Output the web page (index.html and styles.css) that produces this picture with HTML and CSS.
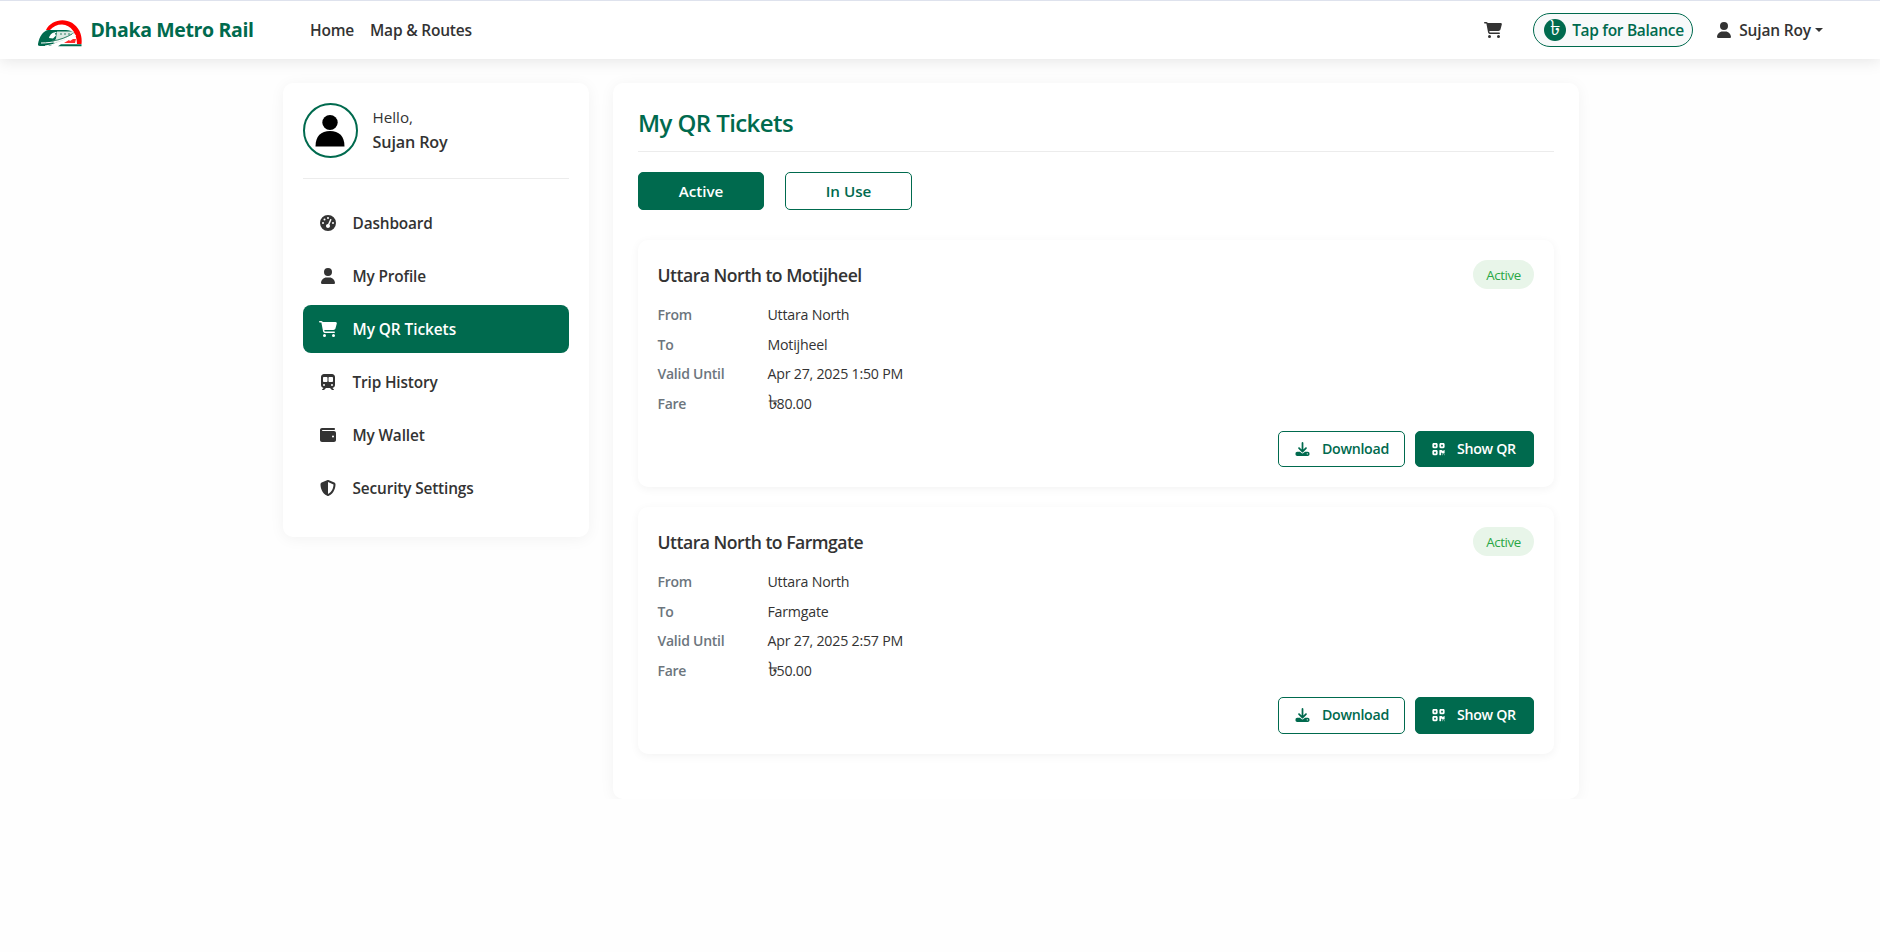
FILE: index.html
```html
<!DOCTYPE html>
<html lang="en">
<head>
<meta charset="utf-8">
<title>Dhaka Metro Rail - My QR Tickets</title>
<link rel="stylesheet" href="styles.css">
</head>
<body>
<svg class="sprite" aria-hidden="true">
  <symbol id="cart" viewBox="0 0 576 512"><path d="M0 24C0 10.700 10.700 0 24 0H69.500c22 0 41.500 12.800 50.600 32h411c26.300 0 45.500 25 38.600 50.400l-41 152.300c-8.500 31.400-37 53.300-69.500 53.300H170.700l5.400 28.500c2.200 11.300 12.100 19.500 23.600 19.500H488c13.300 0 24 10.700 24 24s-10.700 24-24 24H199.700c-34.600 0-64.300-24.600-70.700-58.500L77.400 54.500c-.7-3.800-4-6.500-7.900-6.500H24C10.700 48 0 37.300 0 24zM128 464a48 48 0 1 1 96 0 48 48 0 1 1-96 0zm336-48a48 48 0 1 1 0 96 48 48 0 1 1 0-96z"/></symbol>
  <symbol id="user" viewBox="0 0 448 512"><path d="M224 256A128 128 0 1 0 224 0a128 128 0 1 0 0 256zm-45.700 48C79.800 304 0 383.800 0 482.300C0 498.700 13.300 512 29.700 512H418.300c16.400 0 29.700-13.300 29.700-29.700C448 383.800 368.200 304 269.700 304H178.300z"/></symbol>
  <symbol id="gauge" viewBox="0 0 512 512"><path d="M0 256a256 256 0 1 1 512 0A256 256 0 1 1 0 256zM288 96a32 32 0 1 0-64 0 32 32 0 1 0 64 0zM256 416c35.300 0 64-28.700 64-64c0-17.400-6.900-33.100-18.100-44.600L366 161.700c5.300-12.100-.2-26.300-12.300-31.600s-26.300 .2-31.600 12.300L257.900 288c-.6 0-1.300 0-1.900 0c-35.300 0-64 28.700-64 64s28.700 64 64 64zM176 144a32 32 0 1 0-64 0 32 32 0 1 0 64 0zM96 288a32 32 0 1 0 0-64 32 32 0 1 0 0 64zm352-32a32 32 0 1 0-64 0 32 32 0 1 0 64 0z"/></symbol>
  <symbol id="train" viewBox="0 0 448 512"><path fill-rule="evenodd" d="M96 0C43 0 0 43 0 96V352c0 48 35.200 87.700 81.100 94.900l-46 46C28.100 499.900 33.100 512 43 512H82.700c8.500 0 16.600-3.400 22.600-9.400L160 448H288l54.600 54.600c6 6 14.100 9.400 22.600 9.400H405c10 0 15-12.100 7.900-19.100l-46-46c46-7.100 81.100-46.900 81.100-94.900V96c0-53-43-96-96-96H96zM64 128c0-17.700 14.300-32 32-32h80c17.700 0 32 14.300 32 32v96c0 17.700-14.300 32-32 32H96c-17.700 0-32-14.300-32-32V128zM272 96h80c17.700 0 32 14.300 32 32v96c0 17.700-14.300 32-32 32H272c-17.700 0-32-14.300-32-32V128c0-17.700 14.300-32 32-32zM64 352a32 32 0 1 1 64 0 32 32 0 1 1-64 0zm288-32a32 32 0 1 1 0 64 32 32 0 1 1 0-64z"/></symbol>
  <symbol id="wallet" viewBox="0 0 512 512"><path fill-rule="evenodd" d="M64 32C28.700 32 0 60.700 0 96V416c0 35.300 28.700 64 64 64H448c35.300 0 64-28.700 64-64V192c0-35.300-28.700-64-64-64H80c-8.800 0-16-7.200-16-16s7.200-16 16-16H448c17.700 0 32-14.300 32-32s-14.300-32-32-32H64zM416 272a32 32 0 1 1 0 64 32 32 0 1 1 0-64z"/></symbol>
  <symbol id="shield" viewBox="0 0 512 512"><path fill-rule="evenodd" d="M256 0c4.600 0 9.200 1 13.400 2.900L457.700 82.800c22 9.300 38.400 31 38.300 57.200c-.5 99.200-41.300 280.700-213.600 363.200c-16.700 8-36.100 8-52.800 0C57.300 420.700 16.500 239.200 16 140c-.1-26.200 16.300-47.900 38.300-57.200L242.700 2.900C246.800 1 251.400 0 256 0zm0 66.800V444.800C394 378 431.100 230.100 432 141.400L256 66.800z"/></symbol>
  <symbol id="download" viewBox="0 0 512 512"><path fill-rule="evenodd" d="M288 32c0-17.700-14.300-32-32-32s-32 14.300-32 32V274.700l-73.400-73.400c-12.500-12.500-32.800-12.500-45.300 0s-12.500 32.800 0 45.300l128 128c12.500 12.500 32.800 12.500 45.300 0l128-128c12.500-12.500 12.500-32.800 0-45.300s-32.800-12.500-45.300 0L288 274.700V32zM64 352c-35.300 0-64 28.700-64 64v32c0 35.300 28.700 64 64 64H448c35.300 0 64-28.700 64-64V416c0-35.300-28.700-64-64-64H346.500l-45.300 45.300c-25 25-65.500 25-90.500 0L165.500 352H64zm368 56a24 24 0 1 1 0 48 24 24 0 1 1 0-48z"/></symbol>
  <symbol id="qr" viewBox="0 0 448 512"><path fill-rule="evenodd" d="M0 80C0 53.500 21.500 32 48 32h96c26.500 0 48 21.500 48 48v96c0 26.500-21.500 48-48 48H48c-26.500 0-48-21.500-48-48V80zM64 96v64h64V96H64zM0 336c0-26.500 21.500-48 48-48h96c26.500 0 48 21.500 48 48v96c0 26.500-21.500 48-48 48H48c-26.500 0-48-21.500-48-48V336zm64 16v64h64V352H64zM304 32h96c26.500 0 48 21.500 48 48v96c0 26.500-21.500 48-48 48H304c-26.500 0-48-21.500-48-48V80c0-26.500 21.500-48 48-48zm80 64H320v64h64V96zM256 304c0-8.800 7.200-16 16-16h64c8.800 0 16 7.200 16 16s7.200 16 16 16h32c8.800 0 16-7.200 16-16s7.200-16 16-16 16 7.200 16 16v96c0 8.800-7.200 16-16 16H368c-8.800 0-16-7.200-16-16s-7.200-16-16-16-16 7.200-16 16v64c0 8.800-7.200 16-16 16H272c-8.800 0-16-7.200-16-16V304zM368 480a16 16 0 1 1 0-32 16 16 0 1 1 0 32zm64 0a16 16 0 1 1 0-32 16 16 0 1 1 0 32z"/></symbol>
</svg>

<header class="navbar">
  <a class="brand">
    <svg class="brand-logo" viewBox="0 0 44 27">
      <path d="M8 10C14-2.500 34-4 41.500 11c2 4 2.500 9 2 13H39C39 14 33 4.500 24 4.500c-5 0-9 2-12 5.500z" fill="#f00"/>
      <path d="M0 24C1 17 5 11 10 10h18c3 0 6 1 8 3L12 26H2C0 26 0 25 0 24z" fill="#006a4e"/>
      <path d="M11 18c1-4 4-6 8-6l-2 1.500 1 2-3 3z" fill="#fff"/>
      <path d="M19 11.500h17c-5 7-13 11-21 12l3-5z" fill="#dce9e3"/>
      <path d="M3 23c12 0 24-3 33-9M7 26c12-2 22-5 31-11" stroke="#fff" stroke-width="1" fill="none"/>
      <path d="M14 21c8-1 15-4 20-7M22 14h2m2 0h2m2 0h2" stroke="#2f8267" stroke-width="1" fill="none"/>
      <path d="M26 23l5-3 1 1 3-2h3l-1 4z" fill="#ff2a2a"/>
      <path d="M23 24.300h20.500v2H20z" fill="#006a4e"/>
    </svg>
    <span class="brand-name">Dhaka Metro Rail</span>
  </a>
  <nav class="main-nav"><a>Home</a><a>Map &amp; Routes</a></nav>
  <div class="nav-right">
    <svg class="nav-cart"><use href="#cart"/></svg>
    <button class="balance"><span class="coin">৳</span><span class="balance-text">Tap for Balance</span></button>
    <a class="account"><svg class="account-icon"><use href="#user"/></svg><span class="account-name">Sujan Roy</span><span class="caret"></span></a>
  </div>
</header>

<main class="layout">
  <aside class="card sidebar">
    <div class="profile">
      <div class="avatar"><svg viewBox="0 0 30 32"><ellipse cx="15" cy="7.500" rx="7.700" ry="7.500"/><path d="M.5 31.500C.5 21 6 16 15 16s14.500 5 14.500 15.500z"/></svg></div>
      <div class="greeting"><span class="hello">Hello,</span><span class="profile-name">Sujan Roy</span></div>
    </div>
    <nav class="menu">
      <a class="menu-item"><svg class="menu-icon"><use href="#gauge"/></svg><span class="menu-label">Dashboard</span></a>
      <a class="menu-item"><svg class="menu-icon"><use href="#user"/></svg><span class="menu-label">My Profile</span></a>
      <a class="menu-item selected"><svg class="menu-icon"><use href="#cart"/></svg><span class="menu-label">My QR Tickets</span></a>
      <a class="menu-item"><svg class="menu-icon"><use href="#train"/></svg><span class="menu-label">Trip History</span></a>
      <a class="menu-item"><svg class="menu-icon"><use href="#wallet"/></svg><span class="menu-label">My Wallet</span></a>
      <a class="menu-item"><svg class="menu-icon"><use href="#shield"/></svg><span class="menu-label">Security Settings</span></a>
    </nav>
  </aside>

  <section class="card content">
    <h1 class="page-title"><span>My QR Tickets</span></h1>
    <div class="tabs"><button class="tab tab-on">Active</button><button class="tab">In Use</button></div>
    <div class="tickets">
      <article class="ticket">
        <div class="ticket-head"><h2 class="ticket-title">Uttara North to Motijheel</h2><span class="badge">Active</span></div>
        <dl class="details">
          <dt>From</dt><dd>Uttara North</dd>
          <dt>To</dt><dd>Motijheel</dd>
          <dt>Valid Until</dt><dd>Apr 27, 2025 1:50 PM</dd>
          <dt>Fare</dt><dd><span class="taka">৳</span>80.00</dd>
        </dl>
        <div class="actions"><button class="btn btn-outline"><svg class="btn-icon"><use href="#download"/></svg><span>Download</span></button><button class="btn btn-solid"><svg class="btn-icon"><use href="#qr"/></svg><span>Show QR</span></button></div>
      </article>
      <article class="ticket">
        <div class="ticket-head"><h2 class="ticket-title">Uttara North to Farmgate</h2><span class="badge">Active</span></div>
        <dl class="details">
          <dt>From</dt><dd>Uttara North</dd>
          <dt>To</dt><dd>Farmgate</dd>
          <dt>Valid Until</dt><dd>Apr 27, 2025 2:57 PM</dd>
          <dt>Fare</dt><dd><span class="taka">৳</span>50.00</dd>
        </dl>
        <div class="actions"><button class="btn btn-outline"><svg class="btn-icon"><use href="#download"/></svg><span>Download</span></button><button class="btn btn-solid"><svg class="btn-icon"><use href="#qr"/></svg><span>Show QR</span></button></div>
      </article>
    </div>
  </section>
</main>
</body>
</html>
```
FILE: styles.css
```css
:root { --green: #006a4e; --ink: #333; }
* { box-sizing: border-box; }
body { margin: 0; background: #fefefe; color: var(--ink); font-family: "Open Sans", "Noto Sans", sans-serif; font-size: 16px; line-height: 1.5; }
button { font-family: inherit; margin: 0; padding: 0; }
svg { fill: currentColor; flex: none; }
span, a { white-space: nowrap; }
.sprite { display: none; }

.navbar { height: 59px; padding: 0 57px 0 38px; display: flex; align-items: center; background: #fff; border-top: 1px solid #dee2ed; box-shadow: 0 2px 15px rgba(0, 0, 0, .1); }
.brand { display: flex; align-items: center; gap: 8.500px; width: 272px; color: var(--green); font-size: 19.500px; font-weight: 700; letter-spacing: -.36px; }
.brand-logo { width: 44px; height: 27px; margin-top: 6px; }
.main-nav { display: flex; gap: 16px; padding-top: 2px; font-size: 15.500px; font-weight: 550; letter-spacing: -.2px; }
.nav-right { margin-left: auto; display: flex; align-items: center; font-size: 15.500px; font-weight: 550; }
.nav-cart { width: 18px; height: 16px; margin-right: 31px; }
.balance { width: 160px; height: 34px; display: flex; align-items: center; gap: 6px; padding-left: 10px; border: 1px solid var(--green); border-radius: 17px; background: #f8f9fa; color: var(--green); font-size: 15.500px; font-weight: 550; letter-spacing: -.3px; }
.coin { width: 22px; height: 22px; border-radius: 50%; background: var(--green); color: #fff; font-size: 21px; line-height: 17px; text-align: center; letter-spacing: 0; }
.account { display: flex; align-items: center; margin-left: 24px; }
.account-icon { width: 14px; height: 16px; margin-right: 8px; }
.account-name { padding-top: 2px; letter-spacing: -.15px; }
.caret { margin-left: 4px; border: 4px solid transparent; border-top-color: currentColor; border-bottom: 0; }

.layout { display: flex; gap: 24px; align-items: flex-start; padding: 24px 301px 0 283px; }
.card { background: #fff; border-radius: 10px; box-shadow: 0 2px 15px rgba(0, 0, 0, .05); }
.sidebar { width: 306px; height: 454px; padding: 20px; }
.profile { display: flex; gap: 14.500px; height: 76px; border-bottom: 1px solid #ececec; }
.avatar { width: 55px; height: 55px; border: 2px solid var(--green); border-radius: 50%; display: grid; place-items: center; padding-right: 2px; color: #000; }
.avatar svg { width: 30px; height: 32px; }
.greeting { display: flex; flex-direction: column; padding-top: 2px; font-size: 15.200px; line-height: 25px; }
.profile-name { font-size: 16.200px; font-weight: 550; letter-spacing: -.15px; }
.menu { display: flex; flex-direction: column; gap: 5px; padding-top: 20px; }
.menu-item { display: flex; align-items: center; gap: 15px; height: 48px; padding-left: 14.500px; border-radius: 8px; font-size: 15.400px; font-weight: 550; letter-spacing: -.15px; }
.menu-icon { width: 20px; height: 16px; }
.menu-label { padding-top: 2px; }
.selected { background: var(--green); color: #fff; font-weight: 600; letter-spacing: -.05px; }

.content { width: 966px; height: 716px; padding: 25px; }
.page-title { margin: 0; height: 44px; border-bottom: 1px solid #ececec; color: var(--green); font-size: 24px; font-weight: 550; line-height: 29px; letter-spacing: -.58px; }
.tabs { display: flex; gap: 21px; padding-top: 20px; }
.tab { width: 127px; height: 38px; border: 1px solid var(--green); border-radius: 5px; background: #fff; color: var(--green); font-size: 15.200px; font-weight: 600; }
.tab-on { width: 126px; background: var(--green); color: #fff; }
.tickets { display: flex; flex-direction: column; gap: 20px; padding-top: 30px; }
.ticket { height: 247px; padding: 20px 20px 20px 19.500px; border-radius: 10px; background: #fff; box-shadow: 0 2px 10px rgba(0, 0, 0, .05); }
.ticket-head { display: flex; justify-content: space-between; height: 41px; }
.ticket-title { margin: 0; font-size: 17.600px; font-weight: 550; line-height: 31px; letter-spacing: -.5px; }
.badge { width: 61px; height: 29px; border-radius: 15px; background: #e8f5e9; color: #28a745; font-size: 13.300px; letter-spacing: -.4px; line-height: 30px; text-align: center; }
.details { display: grid; grid-template-columns: 110px 1fr; grid-auto-rows: 29.600px; margin: 0; font-size: 14.200px; line-height: 27.500px; letter-spacing: -.22px; }
.details dt { color: #6c757d; font-weight: 600; font-size: 14px; letter-spacing: -.25px; }
.details dd { margin: 0; }
.taka { font-size: 20px; line-height: 20px; letter-spacing: -1px; }
.actions { display: flex; justify-content: flex-end; gap: 10px; padding-top: 12px; }
.ticket:last-child .actions { padding-top: 11px; }
.btn { display: flex; align-items: center; height: 36px; border: 1px solid var(--green); border-radius: 5px; font-size: 14.200px; font-weight: 600; padding-left: 16px; gap: 12px; letter-spacing: -.3px; line-height: 20px; padding-bottom: 1px; }
.btn-outline { width: 127px; background: #fff; color: var(--green); }
.btn-solid { width: 119px; background: var(--green); color: #fff; padding-left: 15px; gap: 11px; }
.ticket:last-child .btn { height: 37px; }
.btn-icon { width: 15px; height: 14px; }
```
